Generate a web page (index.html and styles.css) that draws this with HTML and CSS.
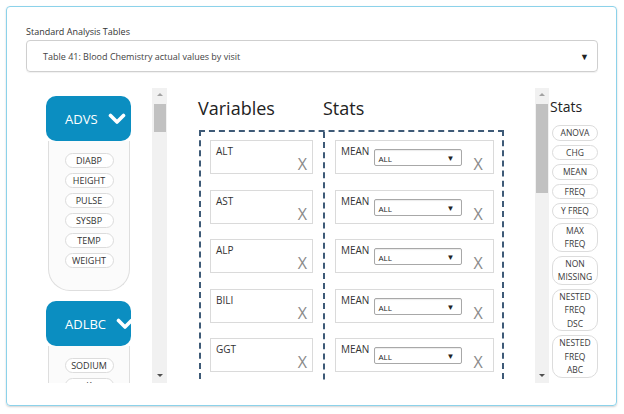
FILE: index.html
```html
<!DOCTYPE html>
<html>
<head>
<meta charset="utf-8">
<link rel="stylesheet" href="styles.css">
</head>
<body>
<div class="card">
  <div class="field-label">Standard Analysis Tables</div>
  <div class="table-select"><span>Table 41: Blood Chemistry actual values by visit</span><span class="caret">▼</span></div>
  <div class="main">
    <div class="datasets">
      <div class="ds-list">
        <div class="ds">
          <div class="ds-head"><span>ADVS</span><svg class="chev" width="18" height="12" viewBox="0 0 18 12"><polyline points="2.5,2.5 9,9 15.5,2.5" fill="none" stroke="#fff" stroke-width="3.6" stroke-linecap="round" stroke-linejoin="round"/></svg></div>
          <div class="ds-body">
            <span class="pill">DIABP</span>
            <span class="pill">HEIGHT</span>
            <span class="pill">PULSE</span>
            <span class="pill">SYSBP</span>
            <span class="pill">TEMP</span>
            <span class="pill">WEIGHT</span>
          </div>
        </div>
        <div class="ds">
          <div class="ds-head"><span>ADLBC</span><svg class="chev" width="18" height="12" viewBox="0 0 18 12"><polyline points="2.5,2.5 9,9 15.5,2.5" fill="none" stroke="#fff" stroke-width="3.6" stroke-linecap="round" stroke-linejoin="round"/></svg></div>
          <div class="ds-body">
            <span class="pill">SODIUM</span>
            <span class="pill">K</span>
          </div>
        </div>
      </div>
      <div class="scrollbar">
        <div class="sb-up"></div>
        <div class="sb-thumb sb-thumb-left"></div>
        <div class="sb-fill"></div>
        <div class="sb-down"></div>
      </div>
    </div>

    <div class="builder">
      <div class="builder-head">
        <div class="bh-vars">Variables</div>
        <div class="bh-stats">Stats</div>
      </div>
      <div class="dropzone">
        <div class="col col-vars">
          <div class="var-box"><span>ALT</span><span class="x">X</span></div>
          <div class="var-box"><span>AST</span><span class="x">X</span></div>
          <div class="var-box"><span>ALP</span><span class="x">X</span></div>
          <div class="var-box"><span>BILI</span><span class="x">X</span></div>
          <div class="var-box"><span>GGT</span><span class="x">X</span></div>
        </div>
        <div class="col col-stats">
          <div class="stat-box"><span class="stat-name">MEAN</span><span class="mini-select"><span>ALL</span><span class="mini-caret">▼</span></span><span class="x">X</span></div>
          <div class="stat-box"><span class="stat-name">MEAN</span><span class="mini-select"><span>ALL</span><span class="mini-caret">▼</span></span><span class="x">X</span></div>
          <div class="stat-box"><span class="stat-name">MEAN</span><span class="mini-select"><span>ALL</span><span class="mini-caret">▼</span></span><span class="x">X</span></div>
          <div class="stat-box"><span class="stat-name">MEAN</span><span class="mini-select"><span>ALL</span><span class="mini-caret">▼</span></span><span class="x">X</span></div>
          <div class="stat-box"><span class="stat-name">MEAN</span><span class="mini-select"><span>ALL</span><span class="mini-caret">▼</span></span><span class="x">X</span></div>
        </div>
      </div>
    </div>

    <div class="scrollbar scrollbar-right">
      <div class="sb-up"></div>
      <div class="sb-thumb sb-thumb-right"></div>
      <div class="sb-fill"></div>
      <div class="sb-down"></div>
    </div>

    <div class="stat-list">
      <div class="stat-title">Stats</div>
      <div class="stat-pills">
        <span class="spill">ANOVA</span>
        <span class="spill">CHG</span>
        <span class="spill">MEAN</span>
        <span class="spill">FREQ</span>
        <span class="spill">Y FREQ</span>
        <span class="spill">MAX<br>FREQ</span>
        <span class="spill">NON<br>MISSING</span>
        <span class="spill">NESTED<br>FREQ<br>DSC</span>
        <span class="spill">NESTED<br>FREQ<br>ABC</span>
      </div>
    </div>
  </div>
</div>
</body>
</html>
```
FILE: styles.css
```css
html, body {
  margin: 0;
  padding: 0;
  background: #ffffff;
}
body {
  font-family: "Open Sans", "Noto Sans", sans-serif;
  color: #333;
}
.card {
  margin: 6px;
  width: 611px;
  height: 400px;
  box-sizing: border-box;
  border: 1px solid #8cd2ea;
  border-radius: 4px;
  box-shadow: 0 1px 2px rgba(0,0,0,0.18);
  padding: 19px 18px 0 19px;
  overflow: hidden;
}
.field-label {
  font-size: 9px;
  line-height: 12px;
  color: #333;
  margin-bottom: 2px;
}
.table-select {
  height: 32px;
  box-sizing: border-box;
  border: 1px solid #cfcfcf;
  border-radius: 4px;
  box-shadow: 0 1px 1px rgba(0,0,0,0.06);
  display: flex;
  align-items: center;
  justify-content: space-between;
  padding: 0 8px 0 16px;
  font-size: 9px;
  color: #444;
}
.caret {
  font-size: 9px;
  color: #222;
}
.main {
  margin-top: 16px;
  height: 295px;
  display: flex;
}
/* left dataset panel */
.datasets {
  width: 141px;
  display: flex;
  flex-shrink: 0;
}
.ds-list {
  width: 126px;
  overflow: hidden;
  padding-top: 8px;
  box-sizing: border-box;
}
.ds {
  margin-left: 20px;
  width: 85px;
  margin-bottom: 10px;
}
.ds-head {
  height: 45px;
  background: #0b8ec1;
  border-radius: 10px;
  color: #fff;
  font-size: 13px;
  display: flex;
  align-items: center;
  gap: 10px;
  padding-left: 19px;
  overflow: hidden;
  white-space: nowrap;
}
.chev { flex-shrink: 0; }
.ds-body {
  margin: 0 1px 0 2px;
  border: 1px solid #dedede;
  border-top: none;
  border-radius: 0 0 22px 22px;
  background: #fbfbfb;
  padding: 12px 0 22px;
  display: flex;
  flex-direction: column;
  align-items: center;
  gap: 5px;
}
.pill {
  width: 49px;
  height: 15px;
  box-sizing: border-box;
  border: 1px solid #dcdcdc;
  border-radius: 8px;
  background: #fff;
  font-size: 9px;
  line-height: 13px;
  text-align: center;
  color: #333;
}
/* scrollbars */
.scrollbar {
  width: 15px;
  height: 295px;
  background: #f1f1f1;
  display: flex;
  flex-direction: column;
  align-items: center;
  flex-shrink: 0;
}
.scrollbar-right { width: 14px; }
.sb-up, .sb-down {
  height: 15px;
  width: 100%;
  position: relative;
}
.sb-up::after, .sb-down::after {
  content: "";
  position: absolute;
  left: 50%;
  margin-left: -3px;
  border-left: 3px solid transparent;
  border-right: 3px solid transparent;
}
.sb-up::after {
  top: 5px;
  border-bottom: 3px solid #a3a3a3;
}
.sb-down::after {
  top: 6px;
  border-top: 3px solid #505050;
}
.sb-thumb {
  width: 12px;
  background: #c1c1c1;
  margin-top: 1px;
}
.sb-thumb-left { height: 28px; }
.sb-thumb-right { height: 89px; }
.sb-fill { flex: 1; }
/* builder */
.builder {
  width: 368px;
  flex-shrink: 0;
  overflow: hidden;
  height: 295px;
  padding-top: 8px;
  box-sizing: border-box;
}
.builder-head {
  display: flex;
  font-size: 18px;
  line-height: 24px;
  color: #222;
  padding-left: 31px;
}
.bh-vars { width: 125px; }
.dropzone {
  margin-top: 10px;
  margin-left: 32px;
  width: 305px;
  height: 320px;
  box-sizing: border-box;
  border: 2px dashed #3e5a77;
  border-bottom: none;
  display: flex;
}
.col {
  display: flex;
  flex-direction: column;
  gap: 15.5px;
  padding-top: 8px;
}
.col-vars {
  width: 122px;
  padding-left: 9px;
  box-sizing: border-box;
}
.col-stats {
  border-left: 2px dashed #3e5a77;
  padding-left: 10px;
  box-sizing: border-box;
  flex: 1;
}
.var-box, .stat-box {
  height: 34px;
  box-sizing: border-box;
  border: 1px solid #dadada;
  background: #fff;
  display: flex;
  font-size: 10px;
  line-height: 13px;
  color: #333;
}
.var-box {
  width: 103px;
  justify-content: space-between;
  padding: 4px 5px 0 5px;
}
.x {
  align-self: flex-end;
  font-size: 16px;
  line-height: 18px;
  color: #8a8a8a;
}
.stat-box {
  width: 159px;
  padding: 4px 5px 0 5px;
}
.stat-name {
  margin-right: 5px;
}
.mini-select {
  margin-top: 4px;
  width: 88px;
  height: 17px;
  box-sizing: border-box;
  border: 1px solid #a8a8a8;
  border-radius: 2px;
  box-shadow: inset 0 1px 1px rgba(0,0,0,0.08);
  display: flex;
  align-items: center;
  justify-content: space-between;
  padding: 2px 7px 0 3px;
  font-size: 8px;
  color: #222;
}
.mini-caret { font-size: 8px; margin-top: -2px; }
.stat-box .x { margin-left: 11px; }
/* right stats list */
.stat-list {
  width: 60px;
  flex-shrink: 0;
  padding-top: 10px;
  box-sizing: border-box;
  overflow: hidden;
  height: 295px;
}
.stat-title {
  font-size: 14px;
  line-height: 18px;
  color: #222;
  padding-left: 1px;
  margin-bottom: 9px;
}
.stat-pills {
  display: flex;
  flex-direction: column;
  gap: 4px;
  padding-left: 3px;
}
.spill {
  width: 46px;
  box-sizing: border-box;
  border: 1px solid #dcdcdc;
  border-radius: 10px;
  font-size: 8.5px;
  line-height: 13.5px;
  text-align: center;
  color: #3a3a3a;
  background: #fff;
}
```
